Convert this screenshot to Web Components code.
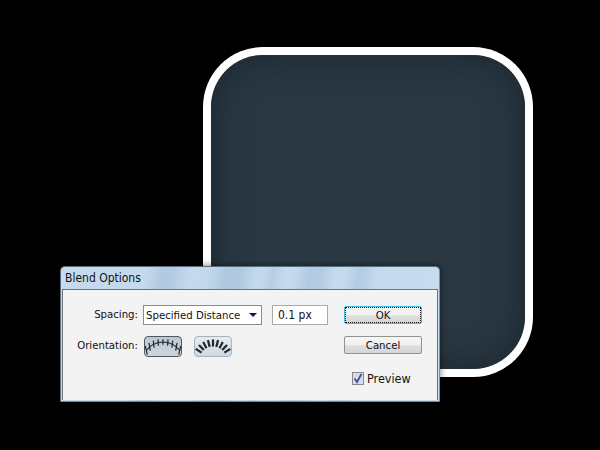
<!DOCTYPE html>
<html>
<head>
<meta charset="utf-8">
<title>Blend Options</title>
<style>
  html, body { margin: 0; height: 100%; background: #000; }
  body { width: 600px; height: 450px; overflow: hidden; position: relative;
    font-family: "DejaVu Sans Condensed", "DejaVu Sans", sans-serif; font-stretch: condensed; }
</style>
</head>
<body>
<icon-shape></icon-shape>
<blend-dialog heading="Blend Options">
  <form-row slot="rows" label="Spacing:">
    <drop-down>Specified Distance</drop-down>
    <text-field>0.1 px</text-field>
  </form-row>
  <form-row slot="rows" label="Orientation:">
    <orient-button active></orient-button>
    <orient-button tilt></orient-button>
  </form-row>
  <push-button slot="actions" focused>OK</push-button>
  <push-button slot="actions">Cancel</push-button>
  <check-box slot="actions" checked>Preview</check-box>
</blend-dialog>

<script>
class IconShape extends HTMLElement {
  constructor() {
    super();
    this.attachShadow({ mode: "open" });
    this.shadowRoot.innerHTML = `<style>
      :host { position: absolute; left: 203px; top: 47px; width: 330px; height: 330px; display: block; }
      .outer { box-sizing: border-box; width: 100%; height: 100%; background: #fff; border-radius: 60px; padding: 8px; }
      .inner { width: 100%; height: 100%; border-radius: 52px; background: #2a3842;
        box-shadow: inset 0 0 34px 4px #1c2831; }
    </style>
    <div class="outer"><div class="inner"></div></div>`;
  }
}
customElements.define("icon-shape", IconShape);

class BlendDialog extends HTMLElement {
  constructor() {
    super();
    this.attachShadow({ mode: "open" });
  }
  connectedCallback() {
    const heading = this.getAttribute("heading");
    this.shadowRoot.innerHTML = `<style>
      :host { position: absolute; left: 60px; top: 266px; width: 380px; height: 136px; display: block; font-size: 11.3px; color: #111; }
      .frame { box-sizing: border-box; width: 100%; height: 100%; display: flex; flex-direction: column;
        border: 1px solid #5a6d7c; border-bottom-color: #35a0cc; border-right-color: #45a8d0; border-radius: 5px 5px 1px 1px;
        padding: 0 1px 1px; box-shadow: 0 0 7px rgba(0,0,0,.55);
        background: linear-gradient(100deg, #c6daee 0, #c5d9ed 84px, #b0cae2 102px, #b4cce3 112px, #c6daee 130px, #c4d8ec 146px,
          #afc9e1 164px, #b0c9e1 178px, #c5d9ed 194px, #c2d7ec 202px, #b6cee5 210px, #c5d9ed 222px, #c5d9ed 230px,
          #b2cbe3 246px, #b4cce3 258px, #c6daee 272px, #c5d9ed 282px, #b4cce4 294px, #b8d0e6 302px, #c6daee 314px, #c8dcf0 100%); }
      .title { height: 22px; flex: none; display: flex; align-items: center; padding-left: 3px; font-size: 12px; color: #111; }
      .body { flex: 1; background: #f3f3f3; border: 1px solid #6d7378; border-bottom: 0; display: flex; padding: 15px 15px 0 0; }
      .rows { width: 268px; display: flex; flex-direction: column; gap: 11px; flex: none; }
      .actions { margin-left: 13px; padding-top: 1px; width: 78px; display: flex; flex-direction: column; align-items: stretch; }
    </style>
    <div class="frame">
      <div class="title">${heading}</div>
      <div class="body">
        <div class="rows"><slot name="rows"></slot></div>
        <div class="actions"><slot name="actions"></slot></div>
      </div>
    </div>`;
  }
}
customElements.define("blend-dialog", BlendDialog);

class FormRow extends HTMLElement {
  constructor() {
    super();
    this.attachShadow({ mode: "open" });
  }
  connectedCallback() {
    this.shadowRoot.innerHTML = `<style>
      :host { display: flex; align-items: flex-start; min-height: 20px; }
      .label { width: 75px; line-height: 20px; text-align: right; margin-right: 5px; flex: none; }
      .ctrls { display: flex; gap: 10px; align-items: flex-start; }
    </style>
    <div class="label">${this.getAttribute("label")}</div>
    <div class="ctrls"><slot></slot></div>`;
  }
}
customElements.define("form-row", FormRow);

class DropDown extends HTMLElement {
  constructor() {
    super();
    this.attachShadow({ mode: "open" });
    this.shadowRoot.innerHTML = `<style>
      :host { box-sizing: border-box; width: 119px; height: 20px; display: flex; align-items: center; justify-content: space-between;
        background: #fff; border: 1px solid #8b8b8b; padding: 0 4px 0 2px; white-space: nowrap; }
      svg { display: block; }
    </style>
    <slot></slot>
    <svg width="8" height="4" viewBox="0 0 8 4"><path d="M0 0H8L4 4Z" fill="#14145a"/></svg>`;
  }
}
customElements.define("drop-down", DropDown);

class TextField extends HTMLElement {
  constructor() {
    super();
    this.attachShadow({ mode: "open" });
    this.shadowRoot.innerHTML = `<style>
      :host { box-sizing: border-box; width: 56px; height: 20px; display: flex; align-items: center;
        background: #fff; border: 1px solid #a9a9a9; padding-left: 5px; white-space: nowrap; font-size: 12px; }
    </style><slot></slot>`;
  }
}
customElements.define("text-field", TextField);

class OrientButton extends HTMLElement {
  constructor() {
    super();
    this.attachShadow({ mode: "open" });
  }
  connectedCallback() {
    const tilt = this.hasAttribute("tilt");
    // ticks sitting on an arc; the tilted button turns them with the curve
    const R = tilt ? 17 : 21, cx = 18, cy = tilt ? 23 : 26;
    const step = tilt ? 0.25 : 0.23;
    let ticks = "";
    for (let i = -4; i <= 4; i++) {
      const a = i * step;
      const x = cx + Math.sin(a) * R;
      const y = cy - Math.cos(a) * R;
      const t = tilt ? a : a * 0.25;
      const len = tilt ? 3.5 : 2.8 + Math.abs(i) * 0.4;
      ticks += `<line x1="${(x - Math.sin(t) * len).toFixed(1)}" y1="${(y + Math.cos(t) * len).toFixed(1)}" x2="${(x + Math.sin(t) * len).toFixed(1)}" y2="${(y - Math.cos(t) * len).toFixed(1)}" />`;
    }
    const arc = tilt ? "" : `<path d="M1.3 13.3A21 21 0 0 1 34.7 13.3" fill="none" stroke="#3a3d42" stroke-width="1.2"/>`;
    this.shadowRoot.innerHTML = `<style>
      :host { box-sizing: border-box; width: 38px; height: 21px; margin: 0 1px; display: block; border-radius: 4px; border: 1px solid #a8b2bc;
        background: linear-gradient(#e8ecf0, #ccd9e4); overflow: hidden; }
      :host([active]) { border-color: #4d5862; background: linear-gradient(#bcc8d2, #ccd6de); }
      svg { display: block; }
    </style>
    <svg width="36" height="19" viewBox="0 0 36 19">${arc}<g stroke="#24272c" stroke-width="${tilt ? 2.2 : 1.2}">${ticks}</g></svg>`;
  }
}
customElements.define("orient-button", OrientButton);

class PushButton extends HTMLElement {
  constructor() {
    super();
    this.attachShadow({ mode: "open" });
    this.shadowRoot.innerHTML = `<style>
      :host { box-sizing: border-box; height: 18px; margin-bottom: 12px; display: flex; align-items: center; justify-content: center;
        border: 1px solid #929292; border-radius: 2px; background: linear-gradient(#f6f6f6 0, #f0f0f0 50%, #dedede 55%, #d6d6d6 100%); color: #111; }
      :host([focused]) { border-color: #42bce0; outline: 1px dotted #111; outline-offset: -2px; }
    </style><slot></slot>`;
  }
}
customElements.define("push-button", PushButton);

class CheckBox extends HTMLElement {
  constructor() {
    super();
    this.attachShadow({ mode: "open" });
    this.shadowRoot.innerHTML = `<style>
      :host { display: flex; align-items: center; gap: 3px; margin-top: 5px; margin-left: 8px; white-space: nowrap; font-size: 12.5px; }
      .box { box-sizing: border-box; width: 12px; height: 13px; border: 1px solid #8a8a8a; background: #d7dde8; flex: none; }
      svg { display: block; }
    </style>
    <div class="box"><svg width="10" height="11" viewBox="0 0 10 11"><path d="M1.5 5.5L4 9L8.5 1" fill="none" stroke="#3f4f9c" stroke-width="1.8"/></svg></div>
    <slot></slot>`;
  }
}
customElements.define("check-box", CheckBox);
</script>
</body>
</html>
